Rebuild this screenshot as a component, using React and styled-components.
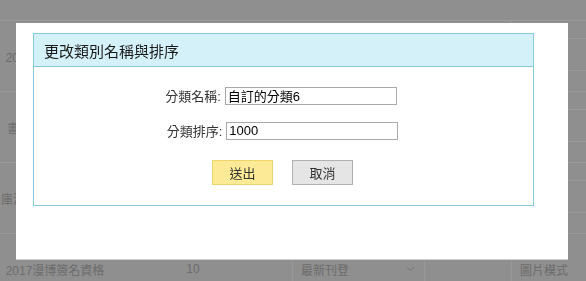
import React from 'react';
import styled, { createGlobalStyle } from 'styled-components';

const GlobalStyle = createGlobalStyle`
  html, body {
    margin: 0;
    padding: 0;
    overflow: hidden;
  }
  body {
    font-family: "Liberation Sans", "Noto Sans CJK TC", sans-serif;
    background: #eeeeee;
  }
`;

const Page = styled.div`
  width: 586px;
  height: 281px;
  background: #eeeeee;
  overflow: hidden;
`;

const TopBar = styled.div`
  height: 20px;
`;

const Row = styled.div`
  display: grid;
  grid-template-columns: 110px 166px 155px 80px 1fr;
  height: 70px;
  border-top: 1px solid #ffffff;
  font-size: 12px;
  color: #b4b4b4;
`;

const Cell = styled.div`
  display: flex;
  align-items: center;
  justify-content: ${(p) => p.$align || 'center'};
  white-space: nowrap;
  overflow: hidden;
`;

const SideCell = styled.div`
  border-left: 1px solid #ffffff;
  display: flex;
  flex-direction: column;
  align-items: center;
  justify-content: ${(p) => (p.$text ? 'center' : 'flex-start')};
  padding-right: ${(p) => (p.$text ? '10px' : '0')};
`;

const SideBox = styled.div`
  align-self: stretch;
  margin-top: 17px;
  height: 31px;
  border-top: 1px solid #ffffff;
  border-bottom: 1px solid #ffffff;
`;

const Select = styled.div`
  width: 133px;
  height: 32px;
  margin-left: 16px;
  border: 1px solid #ffffff;
  display: flex;
  align-items: center;
  justify-content: space-between;
  padding: 0 9px 0 8px;
  box-sizing: border-box;
  color: #b4b4b4;
`;

const Overlay = styled.div`
  position: fixed;
  inset: 0;
  background: rgba(0, 0, 0, 0.4);
`;

const Modal = styled.div`
  position: fixed;
  left: 16px;
  top: 23px;
  width: 552px;
  height: 236px;
  box-sizing: border-box;
  background: #ffffff;
  padding: 10px 17px 0 17px;
  box-shadow: 0 1px 0 #cfcfcf;
`;

const Panel = styled.div`
  width: 501px;
  box-sizing: border-box;
  border: 1px solid #88c9da;
`;

const PanelHead = styled.div`
  height: 32px;
  background: #d4f0f9;
  border-bottom: 1px solid #88c9da;
  display: flex;
  align-items: center;
  padding-left: 10px;
  font-size: 15px;
  color: #1a1a1a;
`;

const PanelBody = styled.div`
  padding: 19px 0 20px;
  display: flex;
  flex-direction: column;
  align-items: center;
`;

const FieldRow = styled.div`
  display: flex;
  align-items: center;
  gap: 4px;
  margin-left: ${(p) => p.$shift || 0}px;
  margin-bottom: ${(p) => p.$gap || 0}px;
  font-size: 13px;
  color: #333;
`;

const Input = styled.div`
  width: 172px;
  height: 18px;
  box-sizing: border-box;
  border: 1px solid #a9a9a9;
  padding: 0 2px;
  display: flex;
  align-items: center;
  font-size: 13px;
  color: #000;
`;

const ButtonRow = styled.div`
  display: flex;
  gap: 19px;
  margin-left: -2px;
`;

const Button = styled.div`
  width: 61px;
  height: 25px;
  box-sizing: border-box;
  display: flex;
  align-items: center;
  justify-content: center;
  font-size: 13px;
  color: #333;
  background: ${(p) => (p.$primary ? '#fcea96' : '#e5e5e5')};
  border: 1px solid ${(p) => (p.$primary ? '#efd46c' : '#b0b0b0')};
`;

// rows 1-3 sit behind the dialog, only the start of their title shows
const rows = [
  { title: '2017年度最受歡迎' },
  { title: '書展限定特典贈品' },
  { title: '庫洛魔法使透明牌篇' },
  { title: '2017漫博簽名資格', count: '10', sort: '最新刊登', last: true },
];

function Chevron() {
  return (
    <svg width="9" height="6" viewBox="0 0 9 6">
      <path d="M1 1l3.5 3.5L8 1" fill="none" stroke="#c4c4c4" strokeWidth="1" />
    </svg>
  );
}

export default function App() {
  return (
    <>
      <GlobalStyle />
      <Page>
        <TopBar />
        {rows.map((r) => (
          <Row key={r.title}>
            <Cell>{r.title}</Cell>
            <Cell>{r.count}</Cell>
            <Cell $align="flex-start">
              <Select>
                <span>{r.sort}</span>
                <Chevron />
              </Select>
            </Cell>
            <Cell />
            {r.last ? (
              <SideCell $text>圖片模式</SideCell>
            ) : (
              <SideCell>
                <SideBox />
              </SideCell>
            )}
          </Row>
        ))}
      </Page>
      <Overlay />
      <Modal>
        <Panel>
          <PanelHead>更改類別名稱與排序</PanelHead>
          <PanelBody>
            <FieldRow $shift={-5} $gap={16}>
              分類名稱:
              <Input>自訂的分類6</Input>
            </FieldRow>
            <FieldRow $shift={-2} $gap={20}>
              分類排序:
              <Input>1000</Input>
            </FieldRow>
            <ButtonRow>
              <Button $primary>送出</Button>
              <Button>取消</Button>
            </ButtonRow>
          </PanelBody>
        </Panel>
      </Modal>
    </>
  );
}
